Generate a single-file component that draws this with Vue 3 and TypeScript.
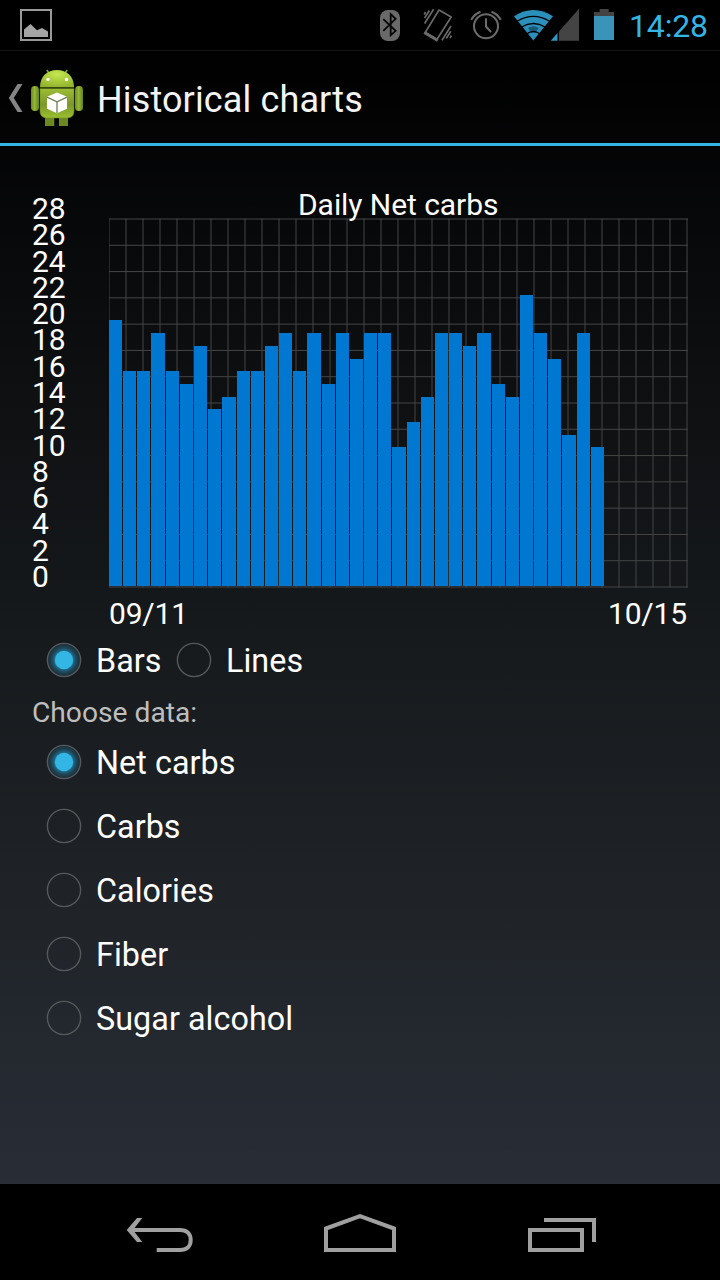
<script setup lang="ts">
import { ref, computed } from 'vue'

const values: number[] = [
  21, 17, 17, 20, 17, 16, 19, 14, 15, 17, 17, 19, 20, 17, 20, 16, 20, 18,
  20, 20, 11, 13, 15, 20, 20, 19, 20, 16, 15, 23, 20, 18, 12, 20, 11,
]

// Chart coordinates: the plot starts at x = 77 and ends at y = 406 of the drawing.
const barLeft = (i: number): number => Math.round(76.95 + i * 14.173)
const bars = computed(() =>
  values.map((v, i) => {
    const y = Math.round(406.6 - v * 12.672)
    return { x: barLeft(i), y, width: barLeft(i + 1) - barLeft(i) - 1, height: 406 - y }
  }),
)
const linePoints = computed(() => bars.value.map((b) => `${b.x + b.width / 2},${b.y}`).join(' '))
const rows = Array.from({ length: 15 }, (_, i) => ({ y: 39 + (i * 368) / 14, label: 28 - i * 2 }))
const columns = Array.from({ length: 35 }, (_, i) => 77 + i * 17)

const chartKinds = ['Bars', 'Lines']
const kind = ref('Bars')
const dataKinds = ['Net carbs', 'Carbs', 'Calories', 'Fiber', 'Sugar alcohol']
const selected = ref('Net carbs')
</script>

<template>
  <div class="screen">
    <header class="status">
      <svg class="gallery" width="34" height="34" viewBox="19 8 34 34">
        <rect x="21" y="10" width="30" height="30" fill="none" stroke="#999" stroke-width="2" />
        <path d="M24 37V29.5L30.5 24L37 30.3L42 28L48 31.5V37Z" fill="#a6a6a6" />
      </svg>
      <svg width="246" height="50" viewBox="379 0 246 50" class="icons">
        <rect x="380" y="10" width="20" height="31" rx="8" fill="#696969" />
        <path d="M383.3 19.2L395.6 30.8L390.7 35.3V14.2L395.6 18.8L383.3 30.8" fill="none" stroke="#050505" stroke-width="1.8" />
        <g fill="none" stroke="#6b6b6b" stroke-width="1.6">
          <path d="M439 10L451.2 17L437 39.3L425.2 32.5Z" stroke-linejoin="round" />
          <path d="M424.3 32.5L437.8 40.5" stroke-width="3" />
          <path d="M424.6 23.5L433.6 9.2M424.6 18L429.4 10.5M424.2 14.5L425.6 12M442 40.3L451 26M446.2 38.5L450.8 31.2M450 38L451.4 35.5" />
          <circle cx="486" cy="26.3" r="12" stroke-width="2" />
          <path d="M486 18.3V26.5L491 32" stroke-width="2" />
          <path d="M471.2 19.8Q474.5 14 480.5 11.7M491.5 11.7Q497.5 14 500.8 19.8" stroke-width="2.2" />
        </g>
        <path d="M533.3 40.5L514 16.2Q533.3 4 553 16.2Z" fill="#2a8fbb" />
        <path d="M528 28Q533.3 24.5 538.8 28L534.9 32.8Q533.3 31.8 531.6 32.8Z" fill="#1b5974" />
        <g fill="none" stroke="#000" stroke-width="1.3">
          <path d="M517 21.2Q533.3 11.5 549.7 21.2" />
          <path d="M521.5 27Q533.3 20 545.2 27" />
          <path d="M526.5 34Q533.3 29 540.2 34" />
        </g>
        <path d="M579 8.7V40.7H559V31.4Z" fill="#444" />
        <path d="M557.5 33.1V40.7H550.7Z" fill="#3497c0" />
        <path d="M594 16V12H599.7V9H608.7V12H614V16Z" fill="#444" />
        <rect x="594" y="16" width="20" height="24" fill="#3a94b9" />
      </svg>
      <span class="clock">14:28</span>
    </header>

    <div class="titlebar">
      <svg width="78" height="60" viewBox="8 68 78 60">
        <defs>
          <linearGradient id="arm" x1="0" x2="1">
            <stop offset="0" stop-color="#6b8725" />
            <stop offset=".45" stop-color="#94b936" />
            <stop offset="1" stop-color="#63811f" />
          </linearGradient>
          <linearGradient id="body" x1="0" x2="0" y1="0" y2="1">
            <stop offset="0" stop-color="#9dbd35" />
            <stop offset=".55" stop-color="#7b9829" />
            <stop offset="1" stop-color="#9ac02f" />
          </linearGradient>
          <radialGradient id="head" cx=".5" cy=".25" r=".75">
            <stop offset="0" stop-color="#c3e650" />
            <stop offset="1" stop-color="#93b52d" />
          </radialGradient>
        </defs>
        <path d="M22.5 84H17.5L8.8 98L17.5 112H22.5L13.8 98Z" fill="#858585" />
        <path d="M49.5 74L46.8 70M64.5 74L67.2 70" stroke="#83a72a" stroke-width="1.6" />
        <rect x="31" y="86" width="8" height="25" rx="3.8" fill="url(#arm)" />
        <rect x="75" y="86" width="8" height="25" rx="3.8" fill="url(#arm)" />
        <path d="M45 115H54.3V126H45ZM59 115H68V126H59Z" fill="#6c8822" />
        <path d="M40 88.5H74V111Q74 118 67 118H47Q40 118 40 111Z" fill="url(#body)" stroke="#6c8a22" stroke-width=".6" />
        <path d="M40 87.3C40 76.5 47 70 57 70S74 76.5 74 87.3Z" fill="url(#head)" />
        <path d="M40 87.8H74" stroke="#3c5014" stroke-width="1.2" />
        <circle cx="48" cy="79.5" r="1.7" fill="#fff" />
        <circle cx="66.5" cy="79.5" r="1.7" fill="#fff" />
        <path d="M57 92.6L67 96.8V108.8L57 113.2L47 108.8V96.8Z" fill="#fff" />
        <path d="M47 97.2L57 101.8L67 97.2M57 101.8V113" fill="none" stroke="#6f7c52" stroke-width="1.3" />
      </svg>
      <h1>Historical charts</h1>
    </div>

    <main>
      <svg class="chart" width="656" height="448" viewBox="0 0 656 448">
        <defs><clipPath id="plot"><rect x="77" y="38" width="579" height="370" /></clipPath></defs>
        <g clip-path="url(#plot)" stroke="#454545">
          <line v-for="x in columns" :key="'c' + x" :x1="x" :x2="x" y1="38.5" y2="407.5" />
          <line v-for="r in rows" :key="'r' + r.label" x1="77" x2="656" :y1="r.y" :y2="r.y" />
        </g>
        <g v-if="kind === 'Bars'" fill="#0077d0">
          <rect v-for="b in bars" :key="b.x" :x="b.x" :y="b.y" :width="b.width" :height="b.height" />
        </g>
        <polyline v-else :points="linePoints" fill="none" stroke="#0077d0" stroke-width="3" />
        <g fill="#fff" font-size="30">
          <text v-for="r in rows" :key="r.label" x="0" :y="r.y">{{ r.label }}</text>
          <text x="266" y="35" textLength="200.5">Daily Net carbs</text>
          <text x="77" y="444" textLength="79">09/11</text>
          <text x="576" y="444" textLength="79">10/15</text>
        </g>
      </svg>

      <div class="kinds">
        <label v-for="k in chartKinds" :key="k" @click="kind = k">
          <svg class="radio" width="36" height="36" viewBox="0 0 36 36">
            <circle v-if="kind === k" cx="18" cy="18" r="16.5" fill="url(#glow)" />
            <circle cx="18" cy="18" r="16.6" fill="none" stroke="#56595c" stroke-width="1.4" />
            <circle v-if="kind === k" cx="18" cy="18" r="9.2" fill="#33b5e5" />
          </svg>
          <span>{{ k }}</span>
        </label>
      </div>
      <p>Choose data:</p>
      <div class="list">
        <label v-for="d in dataKinds" :key="d" @click="selected = d">
          <svg class="radio" width="36" height="36" viewBox="0 0 36 36">
            <defs>
              <radialGradient id="glow">
                <stop offset=".5" stop-color="#23779a" />
                <stop offset=".75" stop-color="#1d4657" />
                <stop offset="1" stop-color="#1b2b34" />
              </radialGradient>
            </defs>
            <circle v-if="selected === d" cx="18" cy="18" r="16.5" fill="url(#glow)" />
            <circle cx="18" cy="18" r="16.6" fill="none" stroke="#56595c" stroke-width="1.4" />
            <circle v-if="selected === d" cx="18" cy="18" r="9.2" fill="#33b5e5" />
          </svg>
          <span>{{ d }}</span>
        </label>
      </div>
    </main>

    <nav>
      <svg width="720" height="96" viewBox="0 1184 720 96" fill="none" stroke="#a0a0a0" stroke-width="4">
        <path d="M131 1230H180C187 1230 190.7 1234 190.7 1240S187 1250 180 1250H156.7" />
        <path d="M126.7 1230L137 1218H142.3L133 1230L142.3 1242H137Z" fill="#a0a0a0" stroke="none" />
        <path d="M326 1250V1228.5L360 1216.2L394 1228.5V1250Z" />
        <path d="M530 1230H582V1250H530ZM544 1220H594V1242" />
      </svg>
    </nav>
  </div>
</template>

<style>
body { margin: 0; background: #000; }
</style>

<style scoped>
.screen {
  width: 720px;
  height: 1280px;
  display: flex;
  flex-direction: column;
  overflow: hidden;
  color: #fff;
  font-family: Roboto, "Noto Sans", sans-serif;
  background: linear-gradient(#000 50px, #08090b 240px, #0f1012 400px, #161a1d 640px, #1e2226 860px, #282d36 1184px);
}
.status {
  height: 50px;
  flex: none;
  display: flex;
  align-items: center;
  border-bottom: 1px solid #141414;
  background: #000;
  padding: 0 13px 0 19px;
}
.gallery { flex: none; }
.icons { margin-left: auto; flex: none; }
.clock {
  width: 78px;
  margin-left: 4px;
  padding-top: 2px;
  color: #33b5e5;
  font-size: 32px;
  line-height: 50px;
  letter-spacing: -0.15px;
  white-space: nowrap;
}
.titlebar {
  box-sizing: border-box;
  height: 95px;
  flex: none;
  display: flex;
  align-items: center;
  gap: 11px;
  padding: 2px 0 0 8px;
  border-bottom: 3px solid #33b5e5;
}
h1 { margin: 3px 0 0; font-size: 36px; font-weight: 400; letter-spacing: 0.13px; color: #f3f3f3; }
main { flex: 1; display: flex; flex-direction: column; padding: 34px 32px 0; }
.chart { display: block; flex: none; overflow: visible; }
.kinds { display: flex; }
.kinds label { width: 130px; }
label {
  display: flex;
  align-items: center;
  height: 64px;
  font-size: 32.3px;
  line-height: 40px;
  letter-spacing: 0.05px;
  white-space: nowrap;
}
label span { padding-top: 2px; }
.kinds, .list { padding-left: 14px; }
.radio { flex: none; margin-right: 14px; }
p { margin: 0; height: 38px; line-height: 42px; font-size: 28.2px; color: #bebebe; }
nav { height: 96px; flex: none; background: #000; }
nav svg { display: block; }
</style>
